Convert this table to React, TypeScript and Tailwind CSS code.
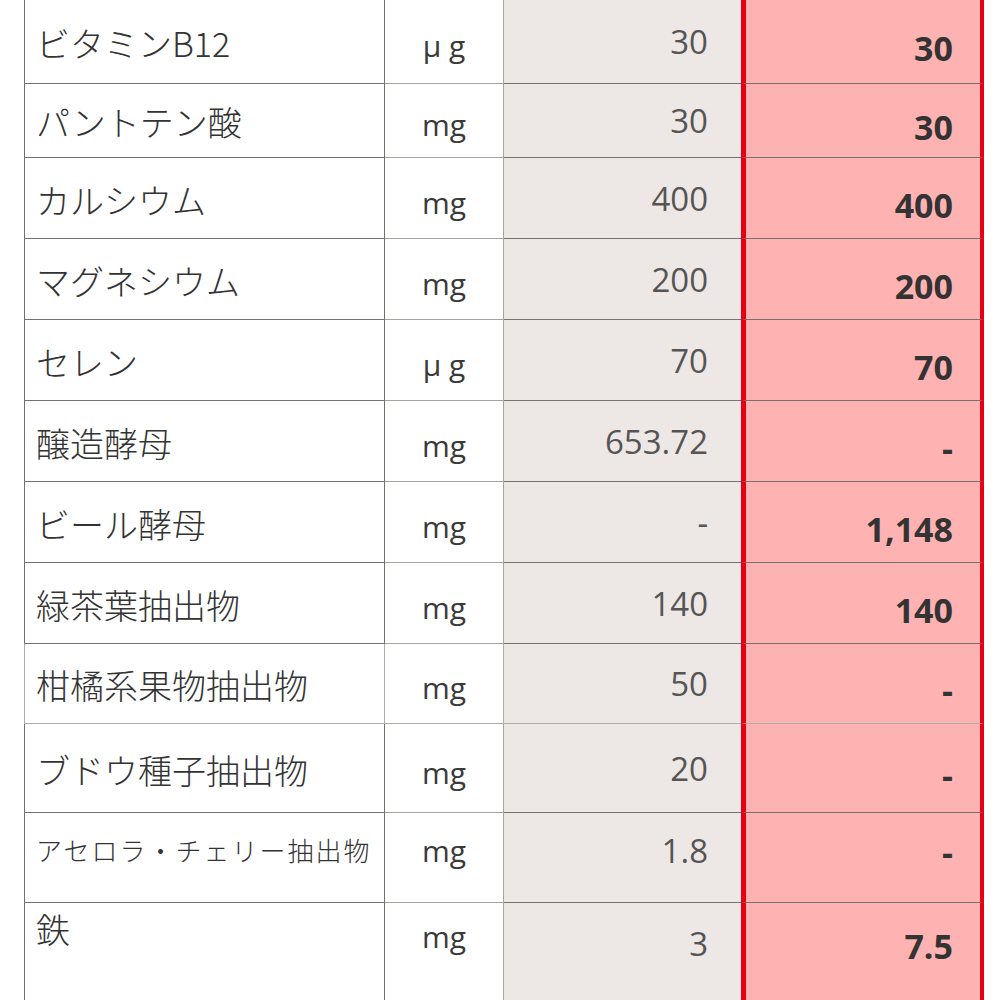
type Row = {
  name: string;
  unit: string;
  std: string;
  ours: string;
  h: string;
  line?: string;
  small?: boolean;
  pos?: "mid" | "up" | "top";
};

const rows: Row[] = [
  { name: "ビタミンB12", unit: "μ g", std: "30", ours: "30", h: "h-[84px]" },
  { name: "パントテン酸", unit: "mg", std: "30", ours: "30", h: "h-[74px]" },
  { name: "カルシウム", unit: "mg", std: "400", ours: "400", h: "h-[81px]" },
  { name: "マグネシウム", unit: "mg", std: "200", ours: "200", h: "h-[81px]" },
  { name: "セレン", unit: "μ g", std: "70", ours: "70", h: "h-[81px]" },
  { name: "醸造酵母", unit: "mg", std: "653.72", ours: "-", h: "h-[81px]" },
  { name: "ビール酵母", unit: "mg", std: "-", ours: "1,148", h: "h-[81px]" },
  { name: "緑茶葉抽出物", unit: "mg", std: "140", ours: "140", h: "h-[81px]" },
  { name: "柑橘系果物抽出物", unit: "mg", std: "50", ours: "-", h: "h-[80px]", line: "border-[#b3adaa]" },
  { name: "ブドウ種子抽出物", unit: "mg", std: "20", ours: "-", h: "h-[89px]" },
  { name: "アセロラ・チェリー抽出物", unit: "mg", std: "1.8", ours: "-", h: "h-[90px]", small: true, pos: "up" },
  { name: "鉄", unit: "mg", std: "3", ours: "7.5", h: "h-[97px]", pos: "top" },
];

const jp = "font-['Noto_Sans_CJK_JP','Noto_Sans',sans-serif]";
const num = "font-['Open_Sans','Noto_Sans',sans-serif]";

function TableRow({ row, last }: { row: Row; last: boolean }) {
  const border = last ? "" : `border-b ${row.line ?? "border-[#77716e]"}`;
  const pos = row.pos ?? "mid";

  const nameCls =
    pos === "top" ? "items-start pt-[4px]" : pos === "up" ? "items-center pb-[16px]" : "items-center pt-[4px]";
  const unitCls =
    pos === "top" ? "items-start pt-[14px]" : pos === "up" ? "items-center pb-[14px]" : "items-center pt-[8px]";
  const stdCls =
    pos === "top" ? "items-start pt-[20px]" : pos === "up" ? "items-center pb-[12px]" : "items-center pt-[2px]";
  const oursCls =
    pos === "top" ? "items-start pt-[21px]" : pos === "up" ? "items-center pb-[10px]" : "items-center pt-[14px]";

  return (
    <div className={`flex ${row.h}`}>
      <div className={`flex w-[361px] shrink-0 border-l border-r border-[#77716e] ${border} pl-[11px] ${nameCls}`}>
        <span
          className={`${jp} font-light text-[#333333] ${
            row.small ? "text-[26px] tracking-[2px]" : "text-[34px]"
          } leading-[1.3]`}
        >
          {row.name}
        </span>
      </div>
      <div className={`flex w-[119px] shrink-0 justify-center border-r border-[#aaa49f] ${border} ${unitCls}`}>
        <span className={`${num} text-[30px] leading-[1.3] text-[#3a3a3a]`}>{row.unit}</span>
      </div>
      <div className={`flex w-[237px] shrink-0 justify-end bg-[#ede8e5] pr-[33px] ${border} ${stdCls}`}>
        <span className={`${num} text-[33px] leading-[1.3] text-[#555555]`}>{row.std}</span>
      </div>
      <div
        className={`flex w-[243px] shrink-0 justify-end border-l-[5px] border-r-[4px] border-l-[#e60012] border-r-[#e60012] bg-[#ffb2b2] pr-[27px] ${border} ${oursCls}`}
      >
        <span className={`${num} text-[34px] font-bold leading-[1.3] text-[#333333]`}>{row.ours}</span>
      </div>
    </div>
  );
}

export default function App() {
  return (
    <div className="h-[1000px] w-[1000px] overflow-hidden bg-white">
      <div className="ml-[24px] flex flex-col">
        {rows.map((row, i) => (
          <TableRow key={row.name} row={row} last={i === rows.length - 1} />
        ))}
      </div>
    </div>
  );
}
